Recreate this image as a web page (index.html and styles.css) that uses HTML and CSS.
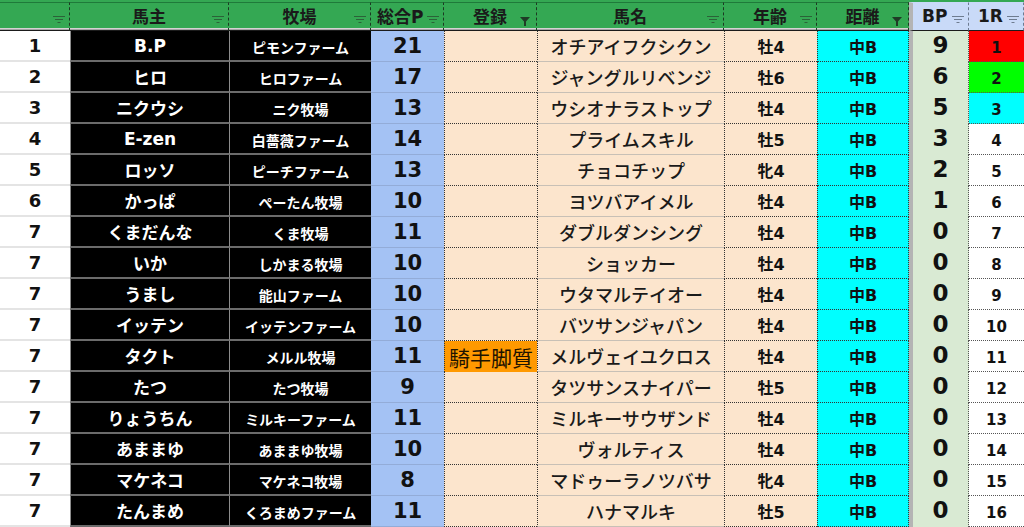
FILE: index.html
```html
<!DOCTYPE html>
<html lang="ja">
<head>
    <meta charset="UTF-8">
    <meta name="viewport" content="width=device-width, initial-scale=1.0">
    <title>BP集計</title>
    <link rel="stylesheet" href="styles.css">
</head>
<body>
    <div class="sheet">
        <div class="head">
            <div class="hcell"><svg class="filter" width="12" height="7" viewBox="0 0 12 7"><path d="M0 .5h12M2 3.5h8M4.5 6.5h3"/></svg></div>
            <div class="hcell">馬主<svg class="filter" width="12" height="7" viewBox="0 0 12 7"><path d="M0 .5h12M2 3.5h8M4.5 6.5h3"/></svg></div>
            <div class="hcell">牧場<svg class="filter" width="12" height="7" viewBox="0 0 12 7"><path d="M0 .5h12M2 3.5h8M4.5 6.5h3"/></svg></div>
            <div class="hcell left">総合P<svg class="filter" width="12" height="7" viewBox="0 0 12 7"><path d="M0 .5h12M2 3.5h8M4.5 6.5h3"/></svg></div>
            <div class="hcell">登録<svg class="funnel" width="10" height="9" viewBox="0 0 10 9"><path d="M0 0h10L6 4.5V9H4V4.5z"/></svg></div>
            <div class="hcell">馬名<svg class="filter" width="12" height="7" viewBox="0 0 12 7"><path d="M0 .5h12M2 3.5h8M4.5 6.5h3"/></svg></div>
            <div class="hcell">年齢<svg class="filter" width="12" height="7" viewBox="0 0 12 7"><path d="M0 .5h12M2 3.5h8M4.5 6.5h3"/></svg></div>
            <div class="hcell">距離<svg class="funnel" width="10" height="9" viewBox="0 0 10 9"><path d="M0 0h10L6 4.5V9H4V4.5z"/></svg></div>
            <div class="hcell blue sep left">BP<svg class="filter" width="12" height="7" viewBox="0 0 12 7"><path d="M0 .5h12M2 3.5h8M4.5 6.5h3"/></svg></div>
            <div class="hcell blue left">1R<svg class="filter" width="12" height="7" viewBox="0 0 12 7"><path d="M0 .5h12M2 3.5h8M4.5 6.5h3"/></svg></div>
        </div>
        <div class="band"></div>
        <div class="body">
            <div class="row">
                <div class="rank">1</div><div class="owner">B.P</div><div class="farm">ピモンファーム</div><div class="total">21</div><div class="reg"></div><div class="horse">オチアイフクシクン</div><div class="age">牡4</div><div class="dist">中B</div><div class="bp">9</div><div class="race red">1</div>
            </div>
            <div class="row">
                <div class="rank">2</div><div class="owner">ヒロ</div><div class="farm">ヒロファーム</div><div class="total">17</div><div class="reg"></div><div class="horse">ジャングルリベンジ</div><div class="age">牡6</div><div class="dist">中B</div><div class="bp">6</div><div class="race green">2</div>
            </div>
            <div class="row">
                <div class="rank">3</div><div class="owner">ニクウシ</div><div class="farm">ニク牧場</div><div class="total">13</div><div class="reg"></div><div class="horse">ウシオナラストップ</div><div class="age">牡4</div><div class="dist">中B</div><div class="bp">5</div><div class="race cyan">3</div>
            </div>
            <div class="row">
                <div class="rank">4</div><div class="owner">E-zen</div><div class="farm">白薔薇ファーム</div><div class="total">14</div><div class="reg"></div><div class="horse">プライムスキル</div><div class="age">牡5</div><div class="dist">中B</div><div class="bp">3</div><div class="race">4</div>
            </div>
            <div class="row">
                <div class="rank">5</div><div class="owner">ロッソ</div><div class="farm">ピーチファーム</div><div class="total">13</div><div class="reg"></div><div class="horse">チョコチップ</div><div class="age">牝4</div><div class="dist">中B</div><div class="bp">2</div><div class="race">5</div>
            </div>
            <div class="row">
                <div class="rank">6</div><div class="owner">かっぱ</div><div class="farm">ぺーたん牧場</div><div class="total">10</div><div class="reg"></div><div class="horse">ヨツバアイメル</div><div class="age">牡4</div><div class="dist">中B</div><div class="bp">1</div><div class="race">6</div>
            </div>
            <div class="row">
                <div class="rank">7</div><div class="owner">くまだんな</div><div class="farm">くま牧場</div><div class="total">11</div><div class="reg"></div><div class="horse">ダブルダンシング</div><div class="age">牡4</div><div class="dist">中B</div><div class="bp">0</div><div class="race">7</div>
            </div>
            <div class="row">
                <div class="rank">7</div><div class="owner">いか</div><div class="farm">しかまる牧場</div><div class="total">10</div><div class="reg"></div><div class="horse">ショッカー</div><div class="age">牡4</div><div class="dist">中B</div><div class="bp">0</div><div class="race">8</div>
            </div>
            <div class="row">
                <div class="rank">7</div><div class="owner">うまし</div><div class="farm">能山ファーム</div><div class="total">10</div><div class="reg"></div><div class="horse">ウタマルテイオー</div><div class="age">牡4</div><div class="dist">中B</div><div class="bp">0</div><div class="race">9</div>
            </div>
            <div class="row">
                <div class="rank">7</div><div class="owner">イッテン</div><div class="farm">イッテンファーム</div><div class="total">10</div><div class="reg"></div><div class="horse">バツサンジャパン</div><div class="age">牡4</div><div class="dist">中B</div><div class="bp">0</div><div class="race">10</div>
            </div>
            <div class="row">
                <div class="rank">7</div><div class="owner">タクト</div><div class="farm">メルル牧場</div><div class="total">11</div><div class="reg on">騎手脚質</div><div class="horse">メルヴェイユクロス</div><div class="age">牡4</div><div class="dist">中B</div><div class="bp">0</div><div class="race">11</div>
            </div>
            <div class="row">
                <div class="rank">7</div><div class="owner">たつ</div><div class="farm">たつ牧場</div><div class="total">9</div><div class="reg"></div><div class="horse">タツサンスナイパー</div><div class="age">牡5</div><div class="dist">中B</div><div class="bp">0</div><div class="race">12</div>
            </div>
            <div class="row">
                <div class="rank">7</div><div class="owner">りょうちん</div><div class="farm">ミルキーファーム</div><div class="total">11</div><div class="reg"></div><div class="horse">ミルキーサウザンド</div><div class="age">牡4</div><div class="dist">中B</div><div class="bp">0</div><div class="race">13</div>
            </div>
            <div class="row">
                <div class="rank">7</div><div class="owner">あままゆ</div><div class="farm">あままゆ牧場</div><div class="total">10</div><div class="reg"></div><div class="horse">ヴォルティス</div><div class="age">牡4</div><div class="dist">中B</div><div class="bp">0</div><div class="race">14</div>
            </div>
            <div class="row">
                <div class="rank">7</div><div class="owner">マケネコ</div><div class="farm">マケネコ牧場</div><div class="total">8</div><div class="reg"></div><div class="horse">マドゥーラノツバサ</div><div class="age">牝4</div><div class="dist">中B</div><div class="bp">0</div><div class="race">15</div>
            </div>
            <div class="row">
                <div class="rank">7</div><div class="owner">たんまめ</div><div class="farm">くろまめファーム</div><div class="total">11</div><div class="reg"></div><div class="horse">ハナマルキ</div><div class="age">牡5</div><div class="dist">中B</div><div class="bp">0</div><div class="race">16</div>
            </div>
        </div>
        <div class="foot"></div>
    </div>
</body>
</html>
```

FILE: styles.css
```css
body {
    margin: 0;
    padding: 0;
    background: #fff;
    font-family: "DejaVu Sans", "Noto Sans CJK JP", sans-serif;
    color: #111;
}

.sheet {
    --cols: 70px 159px 142px 73px 93px 187px 93px 92px 60px 55px;
    width: 1024px;
    height: 527px;
    overflow: hidden;
    display: flex;
    flex-direction: column;
}

/* header */
.head {
    display: grid;
    grid-template-columns: var(--cols);
    height: 28px;
    padding-top: 2px;
    box-sizing: border-box;
    background: #34a853;
}

.hcell {
    position: relative;
    display: flex;
    align-items: center;
    justify-content: center;
    padding-bottom: 2px;
    border-top: 1px solid #1f7a3a;
    border-bottom: 1px solid #1b1b1b;
    border-right: 1px dashed #1c3a22;
    font-family: "Noto Sans CJK JP", sans-serif;
    font-size: 17px;
    font-weight: bold;
    color: #1a1a1a;
}

.hcell.left {
    justify-content: flex-start;
    padding-left: 6px;
    font-family: "DejaVu Sans", "Noto Sans CJK JP", sans-serif;
}

.hcell.blue {
    background: #c9daf8;
    border-top-color: #c9daf8;
    border-right: 1px dashed #6d7b91;
    padding-left: 9px;
}

.hcell.sep {
    border-left: 4px solid #b4b4b4;
}

.filter {
    position: absolute;
    right: 4px;
    top: 13px;
    stroke: #2b6238;
    stroke-width: 1;
    fill: none;
}

.blue .filter {
    stroke: #6e7c90;
}

.funnel {
    position: absolute;
    right: 6px;
    top: 14px;
    fill: #1f3b26;
}

.band {
    height: 5px;
    box-sizing: border-box;
    background: #d3d3d3;
    border-bottom: 2px solid #a5a5a5;
}

/* rows */
.body {
    flex: 1;
    display: flex;
    flex-direction: column;
}

.row {
    flex: 1;
    display: grid;
    grid-template-columns: var(--cols);
}

.row > div {
    display: flex;
    align-items: center;
    justify-content: center;
    box-sizing: border-box;
    white-space: nowrap;
    padding-top: 1px;
}

.rank {
    background: #fff;
    border-bottom: 2px solid #e4e4e4;
    font-size: 18px;
    font-weight: bold;
}

.owner,
.farm {
    background: #000;
    color: #fff;
    font-weight: bold;
    border-bottom: 2px solid #6b6b6b;
    border-left: 1px solid #8c8c8c;
}

.owner {
    font-size: 17px;
}

.farm {
    font-size: 14px;
    padding-top: 4px !important;
}

.total {
    background: #a4c2f4;
    border-bottom: 1px solid #93acd8;
    font-size: 21px;
    font-weight: bold;
}

.reg {
    background: #fce5cd;
    border-left: 1px dotted #333;
    border-bottom: 1px dotted #333;
}

.reg.on {
    background: #ff9900;
    color: #1e1400;
    font-family: "Noto Sans CJK JP", sans-serif;
    font-size: 21px;
    border-bottom: none;
}

.horse {
    background: #fce5cd;
    border-left: 1px dotted #333;
    border-bottom: 1px solid #c8c0b6;
    font-family: "Noto Sans CJK JP", sans-serif;
    font-size: 18px;
    font-weight: 500;
    color: #1a1a1a;
}

.age {
    background: #fce5cd;
    border-left: 1px dotted #333;
    border-bottom: 1px dotted #333;
    font-size: 16px;
    font-weight: bold;
}

.dist {
    background: #00ffff;
    border-left: 1px dotted #333;
    border-right: 1px dotted #333;
    border-bottom: 1px dotted #333;
    font-size: 16px;
    font-weight: bold;
}

.bp {
    background: #d9ead3;
    border-left: 4px solid #b4b4b4;
    border-right: 1px dotted #555;
    font-size: 23px;
    font-weight: bold;
    padding-bottom: 4px;
}

.race {
    background: #fff;
    border-bottom: 1px dotted #555;
    font-size: 15px;
    font-weight: bold;
    align-items: flex-end !important;
    padding-bottom: 4px;
}

.race.red {
    background: #ff0000;
}

.race.green {
    background: #00ff00;
}

.race.cyan {
    background: #00ffff;
}

.foot {
    height: 1px;
    background: #2f9a4f;
}
```
